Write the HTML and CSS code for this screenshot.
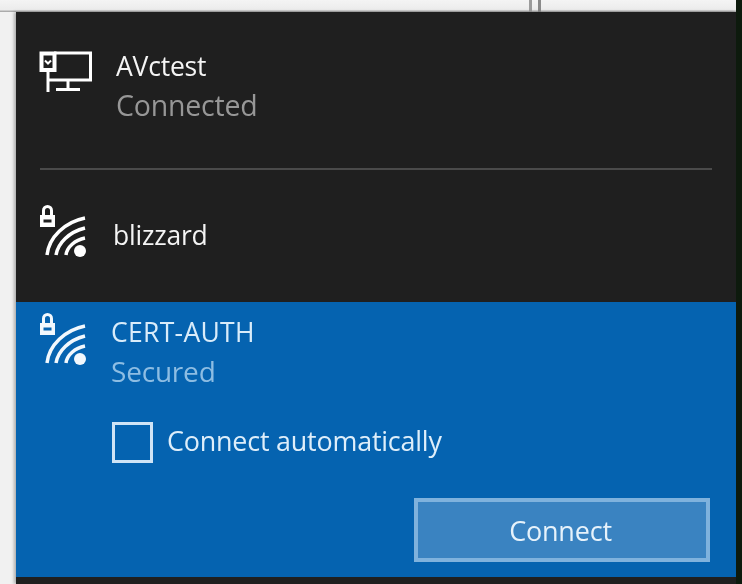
FILE: index.html
```html
<!DOCTYPE html>
<html lang="en">
<head>
<meta charset="utf-8">
<title>Networks</title>
<link rel="stylesheet" href="styles.css">
</head>
<body>
<div class="screen">
  <div class="top-strip"><span class="grip"></span></div>
  <div class="main">
    <section class="panel">
      <div class="row row-connected">
        <svg class="icon icon-pc" viewBox="0 0 56 44" fill="none" stroke="#fff" stroke-width="3">
          <path d="M16 3H52.500V30H10"/>
          <path d="M3.500 3.500H16.500V20H3.500Z" stroke-width="4"/>
          <path d="M7 10.500l3 3 3-3" stroke-width="2"/>
          <path d="M10 20V42"/>
          <path d="M30 30V39M18 39.500H42"/>
        </svg>
        <div class="labels labels-connected">
          <div class="name">AVctest</div>
          <div class="status">Connected</div>
        </div>
      </div>
      <div class="divider"></div>
      <div class="row row-plain">
        <svg class="icon icon-wifi" viewBox="0 0 50 54" fill="none" stroke="#fff" stroke-width="3.500">
          <path d="M5.500 12V7.500a4 4 0 0 1 8 0V12" stroke-width="3"/>
          <rect x="2" y="12" width="15" height="12" fill="#fff" stroke="none"/>
          <rect x="5.500" y="16.500" width="8" height="3" fill="#1f1f1f" stroke="none"/>
          <path d="M9 52C11 34 27 19 47 15"/>
          <path d="M18 52C20 40 31 29 47 25"/>
          <path d="M28 52C29 44 37 37 47 35"/>
          <circle cx="42" cy="48" r="6" fill="#fff" stroke="none"/>
        </svg>
        <div class="name name-plain">blizzard</div>
      </div>
      <div class="selected">
        <div class="row row-selected">
          <svg class="icon icon-wifi" viewBox="0 0 50 54" fill="none" stroke="#f2f8fd" stroke-width="3.500">
            <path d="M5.500 12V7.500a4 4 0 0 1 8 0V12" stroke-width="3"/>
            <rect x="2" y="12" width="15" height="12" fill="#f2f8fd" stroke="none"/>
            <rect x="5.500" y="16.500" width="8" height="3" fill="#0563b0" stroke="none"/>
            <path d="M9 52C11 34 27 19 47 15"/>
            <path d="M18 52C20 40 31 29 47 25"/>
            <path d="M28 52C29 44 37 37 47 35"/>
            <circle cx="42" cy="48" r="6" fill="#f2f8fd" stroke="none"/>
          </svg>
          <div class="labels">
            <div class="name name-selected">CERT-AUTH</div>
            <div class="status status-selected">Secured</div>
          </div>
        </div>
        <label class="auto">
          <span class="checkbox"></span>
          <span class="auto-text">Connect automatically</span>
        </label>
        <div class="actions">
          <button class="connect" type="button">Connect</button>
        </div>
      </div>
      <div class="panel-foot"></div>
    </section>
    <div class="edge"></div>
  </div>
</div>
</body>
</html>
```
FILE: styles.css
```css
* { box-sizing: border-box; }
html, body { margin: 0; padding: 0; background: #f1f1f1; }
.screen {
  width: 742px;
  height: 584px;
  overflow: hidden;
  display: flex;
  flex-direction: column;
  font-family: "Open Sans", "Noto Sans", sans-serif;
  filter: blur(0.7px);
}
.top-strip {
  height: 12px;
  flex: none;
  padding-left: 529px;
  background: linear-gradient(#f4f4f4, #ececec 80%, #9a9a9a);
}
.grip {
  display: block;
  width: 12px;
  height: 12px;
  border-left: 3px solid #9b9b9b;
  border-right: 3px solid #8a8a8a;
}
.main { flex: 1; display: flex; padding-left: 16px; min-height: 0; }
.panel {
  width: 720px;
  display: flex;
  flex-direction: column;
  background: #1f1f1f;
  box-shadow: -2px 0 3px rgba(90, 90, 90, 0.45);
}
.edge { flex: 1; background: #0d1a0d; margin-top: -12px; }
.row { display: flex; }
.icon { flex: none; display: block; }
.icon-pc { width: 56px; height: 44px; margin: 38px 0 0 22px; }
.icon-wifi { width: 50px; height: 54px; margin-left: 22px; }
.labels-connected { margin: 34px 0 0 22px; }
.name { font-size: 26.500px; line-height: 40px; color: #f4f4f4; letter-spacing: -0.2px; }
.status { font-size: 28.500px; line-height: 38px; color: #979797; letter-spacing: -0.2px; }
.row-connected { height: 156px; }
.divider { height: 2px; margin: 0 24px; background: #4a4a4a; flex: none; }
.row-plain { height: 132px; padding-top: 33px; align-items: flex-start; }
.name-plain { margin: 12px 0 0 25px; }
.selected {
  height: 275px;
  flex: none;
  background: #0563b0;
  display: flex;
  flex-direction: column;
}
.row-selected { padding-top: 9px; }
.row-selected .labels { margin: 1px 0 0 23px; }
.name-selected { color: #d9ecfa; letter-spacing: 0.3px; }
.status-selected { color: #8dbde3; font-size: 28px; }
.auto { display: flex; align-items: center; margin: 32px 0 0 96px; }
.checkbox { width: 41px; height: 41px; border: 3px solid #cfe4f6; flex: none; }
.auto-text { margin: 0 0 4px 14px; font-size: 26.900px; color: #deeefa; letter-spacing: -0.2px; }
.actions { display: flex; justify-content: flex-end; margin: 35px 26px 0 0; }
.connect {
  width: 296px;
  height: 64px;
  border: 4px solid #7fb2dd;
  background: #3a83c1;
  color: #e6f2fb;
  font: 27px "Open Sans", "Noto Sans", sans-serif;
  letter-spacing: -0.2px;
  padding: 0 3px 0 0;
}
.panel-foot { flex: 1; }
```
